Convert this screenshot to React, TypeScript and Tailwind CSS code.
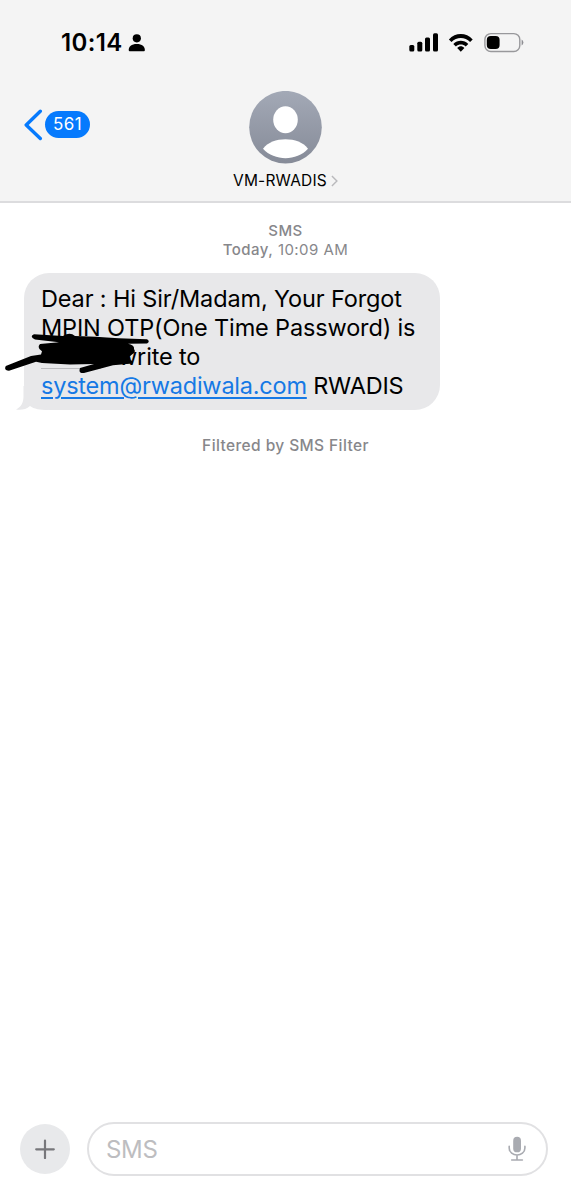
import React from "react";

function StatusBar() {
  return (
    <div className="flex h-[84px] items-start justify-between pl-[60px] pr-[47px] pt-[29px]">
      <div className="flex h-7 items-center">
        <span className="w-[63px] whitespace-nowrap pl-px text-[24px] font-semibold leading-7 tracking-[0.35px]">10:14</span>
        <svg className="ml-[5px]" width="18" height="18" viewBox="0 0 18 18">
          <circle cx="8.8" cy="4.3" r="4.1" />
          <path d="M.8 16.5C.2 12.7 3.7 10 8.8 10s8.6 2.7 8 6.5c0 .5-.3.8-.8.8H1.6c-.5 0-.8-.3-.8-.8Z" />
        </svg>
      </div>
      <svg width="115" height="28" viewBox="409 29 115 28">
        <rect x="409.3" y="45" width="5" height="6.5" rx="1.5" />
        <rect x="417.3" y="41.7" width="5" height="9.8" rx="1.5" />
        <rect x="425" y="37.5" width="5" height="14" rx="1.5" />
        <rect x="433" y="33.3" width="5" height="18.2" rx="1.5" />
        <path d="M448.9 39.4C455.4 32.1 466.2 32.1 472.7 39.4L470.1 42C465 36.6 456.6 36.6 451.5 42Z" />
        <path d="M453.3 43.9C457.5 39.8 464.1 39.8 468.3 43.9L465.7 46.4C462.8 43.8 458.8 43.8 455.9 46.4Z" />
        <path d="M457.2 48C459.4 45.8 462.2 45.8 464.4 48L460.8 51.7Z" />
        <rect x="484.9" y="33.6" width="34.9" height="17.9" rx="6" fill="none" stroke="#98989b" strokeWidth="1.4" />
        <rect x="486.8" y="35.9" width="12.8" height="13" rx="4" />
        <path d="M521.6 39.5q1.8 1 1.8 3t-1.8 3Z" fill="#8e8e93" />
      </svg>
    </div>
  );
}

function Contact() {
  return (
    <div className="flex flex-col items-center">
      <svg className="mt-[7px]" width="73" height="73" viewBox="0 0 73 73">
        <defs>
          <linearGradient id="avatar" x1="0" y1="0" x2="0" y2="1">
            <stop offset="0" stopColor="#a3a9b6" />
            <stop offset="1" stopColor="#868b98" />
          </linearGradient>
        </defs>
        <circle cx="36.5" cy="36.2" r="36.3" fill="url(#avatar)" />
        <ellipse cx="36.5" cy="28.7" rx="12.3" ry="13.5" fill="white" />
        <path d="M14 57.8C23 45.2 50 45.2 59 57.8C47.5 70.4 25.5 70.4 14 57.8Z" fill="white" />
      </svg>
      <div className="mt-[7px] flex items-center">
        <span className="w-[97px] whitespace-nowrap text-[15.5px] leading-5 tracking-[0.2px]">VM-RWADIS</span>
        <svg className="ml-px" width="7" height="12" viewBox="0 0 7 12" fill="none" stroke="#b9b9bc" strokeWidth="1.4">
          <path d="M.9 1 5.9 6 .9 11" />
        </svg>
      </div>
    </div>
  );
}

function Header() {
  return (
    <header className="h-[203px] border-b-2 border-[#dcdcde] bg-[#f4f4f4]">
      <StatusBar />
      <div className="grid grid-cols-[120px_1fr_120px]">
        <div className="flex h-[81px] items-center pl-6">
          <svg width="19" height="32" viewBox="0 0 19 32" fill="none" stroke="#067afd" strokeWidth="3.4" strokeLinecap="round" strokeLinejoin="round">
            <path d="M16.3 2.3 2.2 16 16.3 29.5" />
          </svg>
          <span className="ml-[2px] flex h-[27px] w-[45px] items-center justify-center rounded-full bg-[#067afd] pt-px text-[17px] tracking-[0.4px] text-white">561</span>
        </div>
        <Contact />
      </div>
    </header>
  );
}

function Scribble() {
  return (
    <svg className="absolute -left-[19.5px] top-[56.5px]" width="150" height="46" viewBox="4 329 150 46">
      <path d="M34 334.2L63 336Q70 331.5 75 336L96 336.8Q116 338.6 147 339.3Q150.5 341.5 147 343.5L128 343.8Q135 345.5 133.9 349Q136.5 352 132 354.5L129 357L130 360Q134 361 132.5 363.6L113 365.2L84 373Q78 373.5 80 368L94 364L70 364.6L42 363L36 361.8L9 370.8Q3.5 370.5 5.8 366L31 356L41 354.5L42 351.3Q36.5 347.8 40 344L59 342.2L35 339.4Q29 336.5 34 334.2Z" />
      <path d="M118 357q1 4 2 0q1 4 2 0q1 4 2 0q2 5 4 0v4" fill="none" stroke="black" strokeWidth="2" />
    </svg>
  );
}

function Message() {
  return (
    <div className="relative ml-[23.5px] mt-[13.5px] h-[137.5px] w-[416px] rounded-[25px] bg-[#e8e8ea] pl-[17.5px] pt-[11.5px] text-[23.5px] leading-[29px]">
      <svg className="absolute -left-[7.5px] bottom-0" width="32" height="24" viewBox="0 0 32 24">
        <path d="M7.5 0V10C7.5 17 5 21 0 23.5C5 24.4 10 23.5 14 20C18 23 24 24 32 24L25 0Z" fill="#e8e8ea" />
      </svg>
      <div className="relative whitespace-nowrap">
        <div className="tracking-[-0.14px]">Dear : Hi Sir/Madam, Your Forgot</div>
        <div className="tracking-[-0.15px]">MPIN OTP(One Time Password) is</div>
        <div className="flex">
          <span className="mt-[26px] h-px w-[60px] bg-[#bcbcbf]" />
          <span className="ml-[17px] tracking-[-0.15px]">write to</span>
        </div>
        <div className="tracking-[-0.22px]">
          <a className="text-[#1679e5] underline decoration-[1.5px] underline-offset-[3px]">system@rwadiwala.com</a> RWADIS
        </div>
      </div>
      <Scribble />
    </div>
  );
}

function Composer() {
  return (
    <footer className="mt-auto flex items-center pb-[24px] pl-5 pr-[23px]">
      <button className="flex size-[50px] items-center justify-center rounded-full bg-[#e8e9eb]">
        <svg width="20" height="20" viewBox="0 0 20 20" stroke="#77777b" strokeWidth="2.2" strokeLinecap="round">
          <path d="M1.2 10.3H18.8M10 1.5V19.1" />
        </svg>
      </button>
      <div className="ml-[17px] flex h-[54px] flex-1 items-center justify-between rounded-full border-2 border-[#e1e1e3] pl-[17px] pr-[20px]">
        <span className="pt-px text-[24px] tracking-[-0.3px] text-[#bdbdc0]">SMS</span>
        <svg width="18" height="26" viewBox="0 0 18 26" fill="none" stroke="#a9abb1" strokeWidth="1.6" strokeLinecap="round">
          <rect x="5.2" y=".8" width="7.8" height="15.5" rx="3.9" fill="#a9abb1" stroke="none" />
          <path d="M1.2 10.2v1.8c0 9.3 15.7 9.3 15.7 0v-1.8M9 19v5M3.7 24h10.7" />
        </svg>
      </div>
    </footer>
  );
}

export default function App() {
  return (
    <div className="flex h-[1200px] w-[571px] flex-col overflow-hidden bg-white font-['Inter',sans-serif] text-black">
      <Header />
      <div className="mt-[18px] text-center text-[15px] leading-[19px] tracking-[0.45px] text-[#87878b]">
        <div className="font-medium">SMS</div>
        <div><span className="font-medium">Today,</span> 10:09 AM</div>
      </div>
      <Message />
      <div className="mt-[26px] text-center text-[15.5px] font-medium leading-5 tracking-[0.4px] text-[#87878b]">Filtered by SMS Filter</div>
      <Composer />
    </div>
  );
}
